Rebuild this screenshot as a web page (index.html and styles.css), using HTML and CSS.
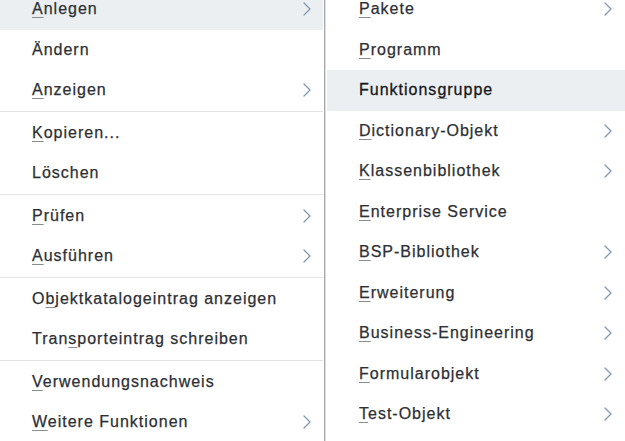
FILE: index.html
```html
<!DOCTYPE html>
<html lang="de">
<head>
<meta charset="utf-8">
<title>Kontextmenü</title>
<link rel="stylesheet" href="styles.css">
</head>
<body>
<div class="menus">
  <ul class="menu menu-main">
    <li class="item active"><span class="label"><u>A</u>nlegen</span><svg class="chev" viewBox="0 0 8 14"><polyline points="1,1 7,7 1,13"/></svg></li>
    <li class="item"><span class="label">Ändern</span></li>
    <li class="item"><span class="label"><u>A</u>nzeigen</span><svg class="chev" viewBox="0 0 8 14"><polyline points="1,1 7,7 1,13"/></svg></li>
    <li class="sep"></li>
    <li class="item"><span class="label"><u>K</u>opieren...</span></li>
    <li class="item"><span class="label">Löschen</span></li>
    <li class="sep"></li>
    <li class="item"><span class="label"><u>P</u>rüfen</span><svg class="chev" viewBox="0 0 8 14"><polyline points="1,1 7,7 1,13"/></svg></li>
    <li class="item"><span class="label"><u>A</u>usführen</span><svg class="chev" viewBox="0 0 8 14"><polyline points="1,1 7,7 1,13"/></svg></li>
    <li class="sep"></li>
    <li class="item"><span class="label">O<u>b</u>jektkatalogeintrag anzeigen</span></li>
    <li class="item"><span class="label">Tran<u>s</u>porteintrag schreiben</span></li>
    <li class="sep"></li>
    <li class="item"><span class="label"><u>V</u>erwendungsnachweis</span></li>
    <li class="item"><span class="label"><u>W</u>eitere Funktionen</span><svg class="chev" viewBox="0 0 8 14"><polyline points="1,1 7,7 1,13"/></svg></li>
  </ul>
  <ul class="menu menu-sub">
    <li class="item"><span class="label"><u>P</u>akete</span><svg class="chev" viewBox="0 0 8 14"><polyline points="1,1 7,7 1,13"/></svg></li>
    <li class="item"><span class="label"><u>P</u>rogramm</span></li>
    <li class="item active strong"><span class="label">Funktions<u>g</u>ruppe</span></li>
    <li class="item"><span class="label"><u>D</u>ictionary-Objekt</span><svg class="chev" viewBox="0 0 8 14"><polyline points="1,1 7,7 1,13"/></svg></li>
    <li class="item"><span class="label"><u>K</u>lassenbibliothek</span><svg class="chev" viewBox="0 0 8 14"><polyline points="1,1 7,7 1,13"/></svg></li>
    <li class="item"><span class="label"><u>E</u>nterprise Service</span></li>
    <li class="item"><span class="label"><u>B</u>SP-Bibliothek</span><svg class="chev" viewBox="0 0 8 14"><polyline points="1,1 7,7 1,13"/></svg></li>
    <li class="item"><span class="label"><u>E</u>rweiterung</span><svg class="chev" viewBox="0 0 8 14"><polyline points="1,1 7,7 1,13"/></svg></li>
    <li class="item"><span class="label"><u>B</u>usiness-Engineering</span><svg class="chev" viewBox="0 0 8 14"><polyline points="1,1 7,7 1,13"/></svg></li>
    <li class="item"><span class="label"><u>F</u>ormularobjekt</span><svg class="chev" viewBox="0 0 8 14"><polyline points="1,1 7,7 1,13"/></svg></li>
    <li class="item"><span class="label"><u>T</u>est-Objekt</span><svg class="chev" viewBox="0 0 8 14"><polyline points="1,1 7,7 1,13"/></svg></li>
  </ul>
</div>
</body>
</html>
```
FILE: styles.css
```css
html, body {
  margin: 0;
  padding: 0;
  background: #ffffff;
  overflow: hidden;
  height: 441px;
}

body {
  font-family: "Liberation Sans", Arial, sans-serif;
  font-size: 16px;
  letter-spacing: 1px;
  color: #2c2f33;
  -webkit-text-stroke: 0.25px #2c2f33;
}

.menus {
  display: flex;
  align-items: flex-start;
  margin-top: -11px;
}

.menu {
  list-style: none;
  margin: 0;
  padding: 0;
}

.menu-main {
  width: 323px;
  padding-right: 1px;
  border-right: 1px solid #a9a9a9;
  box-shadow: 1px 0 0 #dedede;
  min-height: 460px;
}

.menu-sub {
  flex: 1;
  margin-left: 2px;
}

.item {
  height: 40.5px;
  display: flex;
  align-items: center;
  justify-content: space-between;
  padding-left: 32px;
  padding-right: 12px;
  box-sizing: border-box;
  white-space: nowrap;
}

.menu-sub .item {
  padding-right: 13px;
}

.item.active {
  background: #eceff2;
}

.item.strong {
  color: #15171a;
  -webkit-text-stroke: 0.3px #15171a;
}

.label u {
  text-decoration: underline;
  text-decoration-color: #8a8d90;
  text-underline-offset: 3px;
  text-decoration-thickness: 1px;
}

.sep {
  height: 1px;
  background: #e3e3e3;
  margin-bottom: 1px;
}

.chev {
  width: 8px;
  height: 14px;
  flex: none;
}

.chev polyline {
  fill: none;
  stroke: #7f98b3;
  stroke-width: 1.3;
  stroke-linecap: round;
  stroke-linejoin: round;
  -webkit-text-stroke: 0;
}
```
